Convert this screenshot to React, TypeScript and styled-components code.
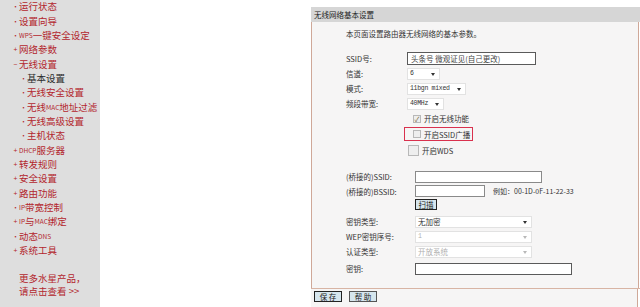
import React from 'react'
import styled, { createGlobalStyle } from 'styled-components'

const GlobalStyle = createGlobalStyle`
  html, body {
    margin: 0;
    padding: 0;
    background: #ffffff;
    font-family: "Noto Sans CJK SC", "DejaVu Sans", sans-serif;
  }
`

const Page = styled.div`
  display: flex;
  width: 640px;
  height: 307px;
  overflow: hidden;
`

const Sidebar = styled.div`
  width: 100px;
  flex-shrink: 0;
  background: #dedede;
  margin-top: -1px;
`

const MenuItem = styled.div<{ sub?: boolean; active?: boolean }>`
  display: flex;
  align-items: center;
  height: 14.35px;
  padding-left: ${p => (p.sub ? 20 : 12)}px;
  font-size: 9.5px;
  color: ${p => (p.active ? '#2a2a2a' : '#b3262d')};
  white-space: nowrap;
`

const Mark = styled.span`
  width: 7px;
  font-size: 7px;
  color: #b3262d;
  text-align: center;
`

const Small = styled.span`
  font-size: 6.5px;
`

const More = styled.div`
  margin-top: 15px;
  padding-left: 19px;
  font-size: 9.5px;
  line-height: 13px;
  color: #b3262d;
`

const Main = styled.div`
  flex: 1;
  padding-left: 211px;
  padding-top: 7px;
`

const Panel = styled.div`
  width: 329px;
  font-size: 7.5px;
  color: #333;
`

const Header = styled.div`
  height: 15px;
  line-height: 15px;
  background: #d6d6d6;
  padding-left: 3px;
  color: #222;
`

const Body = styled.div`
  background: #f6f5f5;
  border-left: 1px solid #cfa898;
  border-right: 1px solid #cfa898;
  padding: 5px 0 12px 34px;
  width: 292px;
`

const Divider = styled.div`
  height: 1px;
  background: #d8b4a4;
`

const Intro = styled.div`
  height: 14px;
  line-height: 14px;
  margin-bottom: 10px;
`

const Row = styled.div<{ h?: number; mt?: number; labelW?: number }>`
  display: flex;
  align-items: center;
  height: ${p => p.h ?? 15}px;
  margin-top: ${p => p.mt ?? 0}px;
  & > :first-child {
    width: ${p => p.labelW ?? 61}px;
    flex-shrink: 0;
  }
`

const Label = styled.span`
  white-space: nowrap;
`

const TextInput = styled.div<{ w: number; h?: number; dark?: boolean; serif?: boolean }>`
  width: ${p => p.w}px;
  height: ${p => p.h ?? 12}px;
  box-sizing: border-box;
  border: 1px solid ${p => (p.dark ? '#5a5a5a' : '#8a8a8a')};
  background: #fff;
  padding-left: 3px;
  line-height: ${p => (p.h ?? 12) - 2}px;
  font-family: ${p => (p.serif ? '"Noto Sans CJK SC", "Liberation Serif", serif' : 'inherit')};
  color: #444;
  white-space: nowrap;
  overflow: hidden;
`

const Select = styled.div<{ w: number; disabled?: boolean; mono?: boolean }>`
  position: relative;
  width: ${p => p.w}px;
  height: 12px;
  box-sizing: border-box;
  border: 1px solid #e2e2e2;
  background: #fff;
  padding-left: 2px;
  line-height: 10px;
  color: ${p => (p.disabled ? '#b0b0b0' : '#333')};
  font-family: ${p => (p.mono ? '"Liberation Mono", monospace' : 'inherit')};
  font-size: ${p => (p.mono ? 6.5 : 7.5)}px;
  letter-spacing: ${p => (p.mono ? -0.3 : 0)}px;
  white-space: nowrap;
`

const Arrow = styled.span<{ disabled?: boolean }>`
  position: absolute;
  right: 4px;
  top: 4px;
  width: 0;
  height: 0;
  border-left: 2.5px solid transparent;
  border-right: 2.5px solid transparent;
  border-top: 3px solid ${p => (p.disabled ? '#b8b8b8' : '#333')};
`

const CheckRow = styled.div<{ h: number; pl: number }>`
  display: flex;
  align-items: center;
  height: ${p => p.h}px;
  padding-left: ${p => p.pl}px;
`

const Highlight = styled.div`
  display: flex;
  align-items: center;
  width: 69px;
  height: 14px;
  box-sizing: border-box;
  border: 1px solid #d9314e;
  padding-left: 8px;
`

const Box = styled.span<{ size: number }>`
  display: inline-flex;
  align-items: center;
  justify-content: center;
  width: ${p => p.size}px;
  height: ${p => p.size}px;
  box-sizing: border-box;
  border: 1px solid #b8b8b8;
  background: #eee;
  margin-right: 3px;
  font-size: 7px;
  color: #7a6a3a;
`

const Example = styled.span`
  margin-left: 8px;
  white-space: nowrap;
  font-size: 7px;
`

const Button = styled.button<{ w: number; strong?: boolean }>`
  width: ${p => p.w}px;
  height: 11px;
  padding: 0;
  border: 1px solid ${p => (p.strong ? '#222' : '#555')};
  background: #d6e6ee;
  font-family: inherit;
  font-size: 7.5px;
  line-height: 9px;
  color: #222;
  white-space: pre;
`

const Footer = styled.div`
  display: flex;
  gap: 7px;
  padding: 2px 0 0 3px;
  background: #f6f5f5;
  height: 17px;
  border-right: 1px solid #cfa898;
  width: 323px;
`

const menu: { text: React.ReactNode; mark: string; sub?: boolean; active?: boolean }[] = [
  { text: '运行状态', mark: '•' },
  { text: '设置向导', mark: '•' },
  { text: <><Small>WPS</Small>一键安全设定</>, mark: '•' },
  { text: '网络参数', mark: '+' },
  { text: '无线设置', mark: '−' },
  { text: '基本设置', mark: '•', sub: true, active: true },
  { text: '无线安全设置', mark: '•', sub: true },
  { text: <>无线<Small>MAC</Small>地址过滤</>, mark: '•', sub: true },
  { text: '无线高级设置', mark: '•', sub: true },
  { text: '主机状态', mark: '•', sub: true },
  { text: <><Small>DHCP</Small>服务器</>, mark: '+' },
  { text: '转发规则', mark: '+' },
  { text: '安全设置', mark: '+' },
  { text: '路由功能', mark: '+' },
  { text: <><Small>IP</Small>带宽控制</>, mark: '•' },
  { text: <><Small>IP</Small>与<Small>MAC</Small>绑定</>, mark: '+' },
  { text: <>动态<Small>DNS</Small></>, mark: '•' },
  { text: '系统工具', mark: '+' },
]

const App = () => {
  return (
    <>
      <GlobalStyle />
      <Page>
        <Sidebar>
          {menu.map((item, i) => (
            <MenuItem key={i} sub={item.sub} active={item.active}>
              <Mark>{item.mark}</Mark>
              {item.text}
            </MenuItem>
          ))}
          <More>
            更多水星产品，
            <br />
            请点击查看 &gt;&gt;
          </More>
        </Sidebar>
        <Main>
          <Panel>
            <Header>无线网络基本设置</Header>
            <Body>
              <Intro>本页面设置路由器无线网络的基本参数。</Intro>
              <Row>
                <Label>SSID号:</Label>
                <TextInput w={129} h={13} dark serif>
                  头条号 微观证见(自己更改)
                </TextInput>
              </Row>
              <Row>
                <Label>信道:</Label>
                <Select w={33} mono>6<Arrow /></Select>
              </Row>
              <Row>
                <Label>模式:</Label>
                <Select w={59} mono>11bgn mixed<Arrow /></Select>
              </Row>
              <Row>
                <Label>频段带宽:</Label>
                <Select w={37} mono>40MHz<Arrow /></Select>
              </Row>
              <CheckRow h={15} pl={67}>
                <Box size={8}>✓</Box>
                开启无线功能
              </CheckRow>
              <CheckRow h={16} pl={58}>
                <Highlight>
                  <Box size={8} />
                  开启SSID广播
                </Highlight>
              </CheckRow>
              <CheckRow h={17} pl={62}>
                <Box size={11} />
                开启WDS
              </CheckRow>
              <Row mt={10} labelW={69}>
                <Label>(桥接的)SSID:</Label>
                <TextInput w={127} />
              </Row>
              <Row h={14} labelW={69}>
                <Label>(桥接的)BSSID:</Label>
                <TextInput w={70} />
                <Example>例如：00-1D-0F-11-22-33</Example>
              </Row>
              <Row h={12} labelW={69}>
                <span />
                <Button w={22} strong>扫描</Button>
              </Row>
              <Row mt={4} labelW={69}>
                <Label>密钥类型:</Label>
                <Select w={117}>无加密<Arrow /></Select>
              </Row>
              <Row labelW={69}>
                <Label>WEP密钥序号:</Label>
                <Select w={117} disabled mono>1<Arrow disabled /></Select>
              </Row>
              <Row labelW={69}>
                <Label>认证类型:</Label>
                <Select w={117} disabled>开放系统<Arrow disabled /></Select>
              </Row>
              <Row mt={2} labelW={69}>
                <Label>密钥:</Label>
                <TextInput w={157} dark />
              </Row>
            </Body>
            <Divider />
            <Footer>
              <Button w={28} strong>{'保 存'}</Button>
              <Button w={28}>{'帮 助'}</Button>
            </Footer>
          </Panel>
        </Main>
      </Page>
    </>
  )
}

export default App
